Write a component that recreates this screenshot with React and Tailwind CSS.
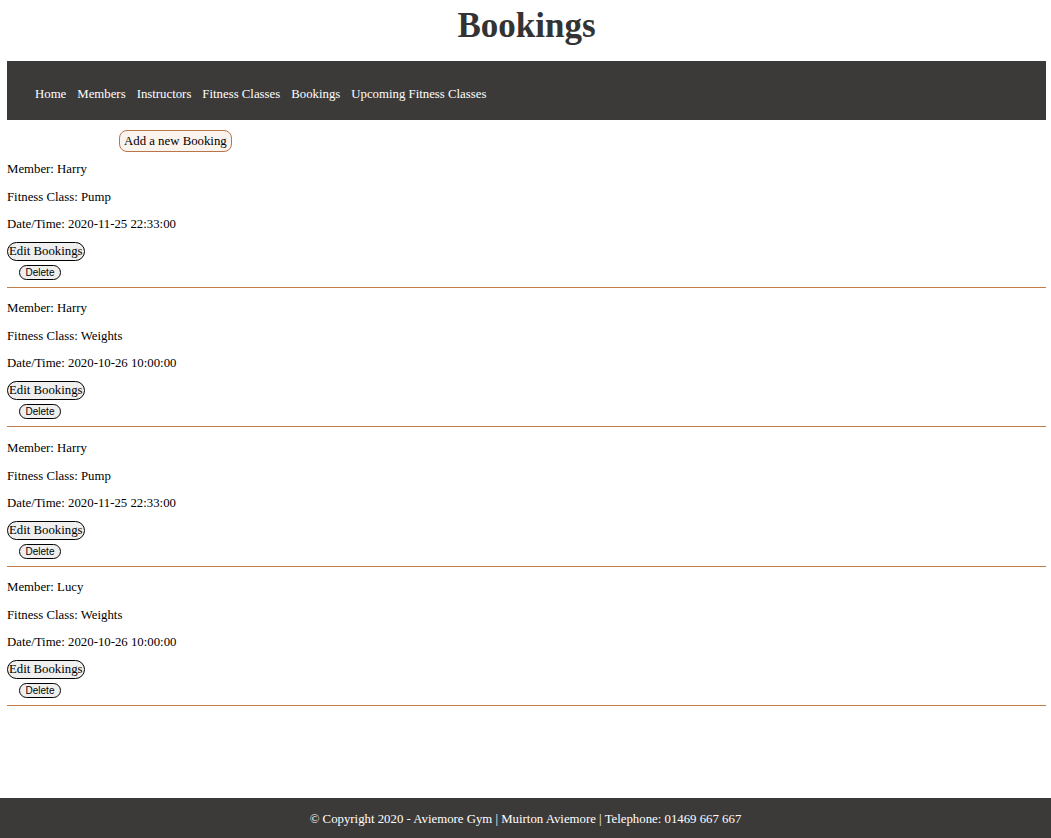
const bookings = [
  { member: "Harry", fitnessClass: "Pump", dateTime: "2020-11-25 22:33:00" },
  { member: "Harry", fitnessClass: "Weights", dateTime: "2020-10-26 10:00:00" },
  { member: "Harry", fitnessClass: "Pump", dateTime: "2020-11-25 22:33:00" },
  { member: "Lucy", fitnessClass: "Weights", dateTime: "2020-10-26 10:00:00" },
];

const navLinks = ["Home", "Members", "Instructors", "Fitness Classes", "Bookings", "Upcoming Fitness Classes"];

function BookingItem({ booking, index }) {
  const top = index === 0 ? "pt-[10px]" : index % 2 === 1 ? "pt-[13px]" : "pt-[14px]";
  return (
    <div className={top}>
      <p className="leading-[15px]">Member: {booking.member}</p>
      <p className="leading-[15px] mt-[13px]">Fitness Class: {booking.fitnessClass}</p>
      <p className="leading-[15px] mt-[12px]">Date/Time: {booking.dateTime}</p>
      <div className="mt-[10px] flex">
        <button className="h-[19px] px-[1px] border border-black rounded-full bg-[#efefef] text-[12.8px] leading-[15px]">
          Edit Bookings
        </button>
      </div>
      <div className="mt-[4px] pl-[12px] flex">
        <button className="h-[15px] w-[42px] border border-black rounded-full bg-[#efefef] text-[10px] leading-[12px] font-['Liberation_Sans',Arial,sans-serif]">
          Delete
        </button>
      </div>
      <hr className="mt-[7px] h-0 border-0 border-t border-[#c27d48]" />
    </div>
  );
}

export default function App() {
  return (
    <div className="min-h-screen flex flex-col bg-white text-[12.8px] text-black font-['Liberation_Serif','Times_New_Roman',serif]">
      <div className="pl-[7px] pr-[5px]">
        <h1 className="pt-[6px] text-center text-[35px] leading-[40px] font-bold text-[#333333]">Bookings</h1>

        <nav className="mt-[15px] h-[59px] bg-[#3b3a39] flex items-center pl-[28px] pt-[8px] gap-[11px] text-white">
          {navLinks.map((link) => (
            <a key={link} href="#" className="leading-[15px]">
              {link}
            </a>
          ))}
        </nav>

        <div className="pt-[10px] pl-[112px] flex">
          <button className="h-[22px] px-[4px] pt-[1px] border border-[#b8764a] rounded-[8px] bg-[#fbf3ee] text-[12.8px] leading-[15px]">
            Add a new Booking
          </button>
        </div>

        {bookings.map((b, i) => (
          <BookingItem key={i} booking={b} index={i} />
        ))}
      </div>

      <footer className="mt-auto h-[40px] pt-[3px] bg-[#3b3a39] flex items-center justify-center text-white">
        © Copyright 2020 - Aviemore Gym | Muirton Aviemore | Telephone: 01469 667 667
      </footer>
    </div>
  );
}
